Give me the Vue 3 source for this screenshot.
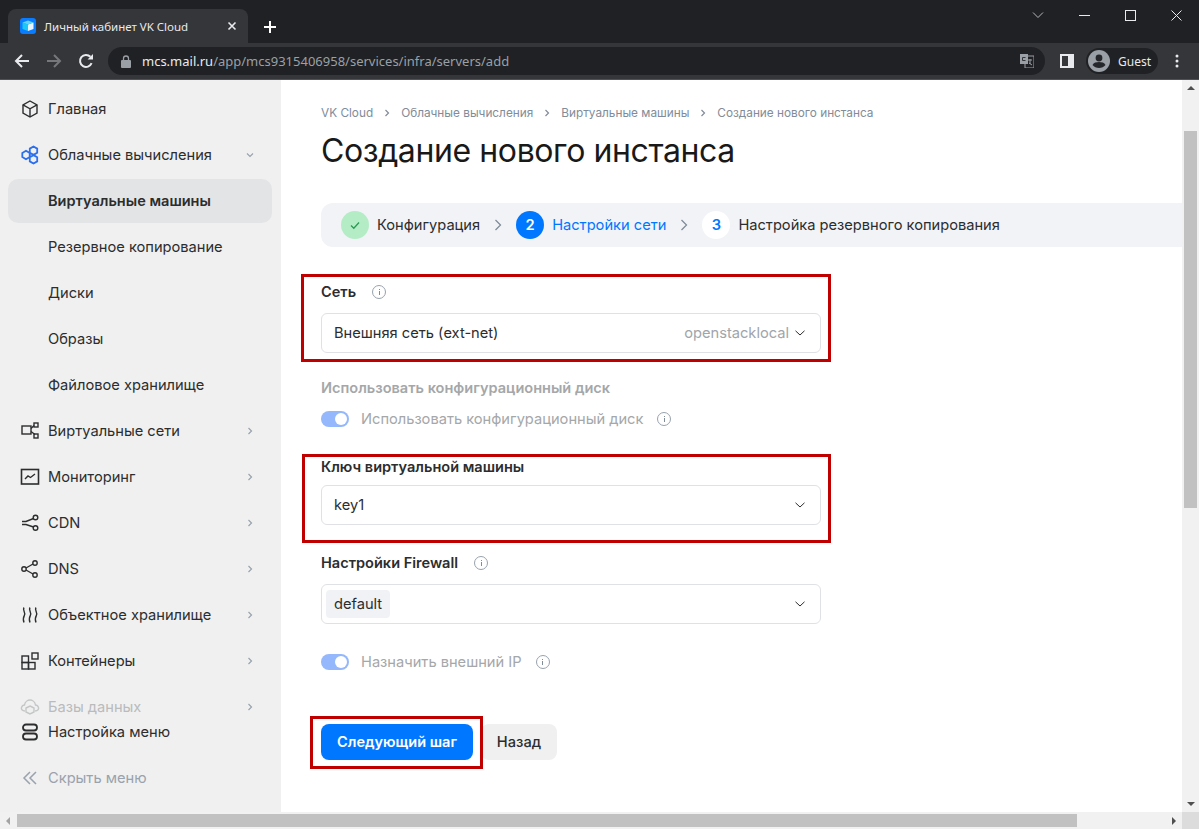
<template>
  <div class="window">
    <div class="tabstrip">
      <div class="tab">
        <svg class="favicon" width="16" height="16" viewBox="0 0 16 16">
          <rect width="16" height="16" rx="3" fill="#0a7cff" />
          <path d="M2.500 4.500 8 6.500v6.500L2.500 11z" fill="#19c8f5" />
          <path d="M13.500 4.500 8 6.500v6.500l5.500-2z" fill="#e8f6ff" />
          <path d="M2.500 4.500 8 2.500l5.500 2L8 6.500z" fill="#5fd4fa" />
        </svg>
        <span class="tab-title">Личный кабинет VK Cloud</span>
        <svg class="tab-close" width="10" height="10" viewBox="0 0 10 10">
          <path d="M1.500 1.500l7 7M8.500 1.500l-7 7" stroke="#e8eaed" stroke-width="1.600" />
        </svg>
      </div>
      <svg class="new-tab" width="14" height="14" viewBox="0 0 14 14">
        <path d="M7 1v12M1 7h12" stroke="#fff" stroke-width="2" />
      </svg>
      <div class="win-controls">
        <svg width="12" height="8" viewBox="0 0 12 8"><path d="M1 1.500l5 5 5-5" fill="none" stroke="#b5b7ba" /></svg>
        <svg width="11" height="11" viewBox="0 0 11 11"><path d="M0 5.500h11" stroke="#e8eaed" /></svg>
        <svg width="11" height="11" viewBox="0 0 11 11"><rect x=".5" y=".5" width="10" height="10" fill="none" stroke="#e8eaed" /></svg>
        <svg width="11" height="11" viewBox="0 0 11 11"><path d="M.5.500l10 10M10.500.500l-10 10" stroke="#e8eaed" /></svg>
      </div>
    </div>

    <div class="toolbar">
      <svg class="tool" width="16" height="16" viewBox="0 0 16 16">
        <path d="M15 8H2M8 2L2 8l6 6" fill="none" stroke="#e8eaed" stroke-width="2" />
      </svg>
      <svg class="tool" width="16" height="16" viewBox="0 0 16 16">
        <path d="M1 8h13M8 2l6 6-6 6" fill="none" stroke="#75777a" stroke-width="2" />
      </svg>
      <svg class="tool" width="16" height="16" viewBox="0 0 16 16">
        <path d="M13.600 10.200A6 6 0 1 1 12.400 3.800" fill="none" stroke="#e8eaed" stroke-width="2" />
        <path d="M9.600 6.400h5.400V1z" fill="#e8eaed" />
      </svg>
      <div class="omnibox">
        <svg width="10" height="13" viewBox="0 0 10 13">
          <path d="M2.500 5V3.500a2.500 2.500 0 0 1 5 0V5" fill="none" stroke="#9aa0a6" stroke-width="1.300" />
          <rect y="5" width="10" height="8" rx="1" fill="#9aa0a6" />
        </svg>
        <span class="url"><b>mcs.mail.ru</b>/app/mcs9315406958/services/infra/servers/add</span>
        <svg class="translate" width="14" height="14" viewBox="0 0 14 14">
          <rect x="5" y="2" width="9" height="12" fill="none" stroke="#9aa0a6" />
          <rect width="8" height="10" fill="#9aa0a6" />
          <path d="M5.500 3.500h-3v3h3" fill="none" stroke="#35363a" />
          <path d="M8 6h4M10 5v5M9 9l3 2" fill="none" stroke="#9aa0a6" />
        </svg>
      </div>
      <svg class="side-panel" width="14" height="14" viewBox="0 0 14 14">
        <rect width="14" height="14" fill="#e8eaed" />
        <rect x="2" y="2" width="6" height="10" fill="#35363a" />
      </svg>
      <div class="profile">
        <svg width="22" height="22" viewBox="0 0 22 22">
          <circle cx="11" cy="11" r="11" fill="#9aa0a6" />
          <circle cx="11" cy="8" r="3.400" fill="#26272a" />
          <path d="M4.500 15c1-2.400 4-3 6.500-3s5.500.6 6.500 3c-1.500 2-4 3-6.500 3s-5-1-6.500-3z" fill="#26272a" />
        </svg>
        <span>Guest</span>
      </div>
      <svg class="kebab" width="4" height="14" viewBox="0 0 4 14">
        <circle cx="2" cy="2" r="1.500" fill="#e8eaed" />
        <circle cx="2" cy="7" r="1.500" fill="#e8eaed" />
        <circle cx="2" cy="12" r="1.500" fill="#e8eaed" />
      </svg>
    </div>

    <div class="viewport">
      <div class="page">
        <aside class="sidebar">
          <nav class="nav">
            <a v-for="item in menu" :key="item.title"
              :class="['nav-item', { sub: item.sub, active: item.active, faded: item.faded }]">
              <svg v-if="item.icon" class="nav-icon" width="20" height="20" viewBox="0 0 20 20" fill="none"
                :stroke="item.color || '#2c2d2e'" stroke-width="1.400" v-html="icons[item.icon]"></svg>
              <span>{{ item.title }}</span>
              <svg v-if="item.arrow" class="nav-arrow" width="8" height="8" viewBox="0 0 8 8" fill="none"
                stroke="#99a2ad" stroke-width="1.200">
                <path :d="item.arrow === 'down' ? 'M1 2.500l3 3 3-3' : 'M2.500 1l3 3-3 3'" />
              </svg>
            </a>
          </nav>
          <div class="side-footer">
            <a class="nav-item compact">
              <svg class="nav-icon" width="20" height="20" viewBox="0 0 20 20" fill="none" stroke="#2c2d2e" stroke-width="1.800">
                <rect x="3" y="2.500" width="14" height="6" rx="3" />
                <rect x="3" y="11.500" width="14" height="6" rx="3" />
              </svg>
              <span>Настройка меню</span>
            </a>
            <a class="nav-item hide">
              <svg class="nav-icon" width="20" height="20" viewBox="0 0 20 20" fill="none" stroke="#99a2ad" stroke-width="1.500">
                <path d="M10 4l-6 6 6 6M16 4l-6 6 6 6" />
              </svg>
              <span>Скрыть меню</span>
            </a>
          </div>
        </aside>

        <main class="content">
          <div class="crumbs">
            <template v-for="(crumb, i) in crumbs" :key="crumb">
              <svg v-if="i" width="6" height="8" viewBox="0 0 6 8" fill="none" stroke="#818c99" stroke-width="1.200">
                <path d="M1.500 1l3 3-3 3" />
              </svg>
              <span>{{ crumb }}</span>
            </template>
          </div>
          <h1>Создание нового инстанса</h1>

          <div class="steps">
            <span class="step-num done">
              <svg width="12" height="12" viewBox="0 0 12 12" fill="none" stroke="#2a9c54" stroke-width="1.300">
                <path d="M2 6.500l2.800 2.800L10 3.500" />
              </svg>
            </span>
            <span class="step-text">Конфигурация</span>
            <svg class="step-arrow" width="8" height="12" viewBox="0 0 8 12" fill="none" stroke="#818c99" stroke-width="1.300">
              <path d="M1.500 1l5 5-5 5" />
            </svg>
            <span class="step-num current">2</span>
            <span class="step-text blue">Настройки сети</span>
            <svg class="step-arrow" width="8" height="12" viewBox="0 0 8 12" fill="none" stroke="#818c99" stroke-width="1.300">
              <path d="M1.500 1l5 5-5 5" />
            </svg>
            <span class="step-num next">3</span>
            <span class="step-text">Настройка резервного копирования</span>
          </div>

          <form class="form" @submit.prevent>
            <div class="field first">
              <span class="mark"></span>
              <label class="label">Сеть <i class="info"></i></label>
              <div class="select">
                <span>Внешняя сеть (ext-net)</span>
                <span class="hint">openstacklocal</span>
                <svg class="caret" width="10" height="6" viewBox="0 0 10 6" fill="none" stroke="#2c2d2e"><path d="M.5.800L5 5l4.500-4.200" /></svg>
              </div>
            </div>

            <label class="label muted gap-disk">Использовать конфигурационный диск</label>
            <div class="switch-row gap-switch">
              <span class="switch"></span>
              <span class="switch-text">Использовать конфигурационный диск</span>
              <i class="info"></i>
            </div>

            <div class="field key">
              <span class="mark"></span>
              <label class="label">Ключ виртуальной машины</label>
              <div class="select">
                <span>key1</span>
                <svg class="caret" width="10" height="6" viewBox="0 0 10 6" fill="none" stroke="#2c2d2e"><path d="M.5.800L5 5l4.500-4.200" /></svg>
              </div>
            </div>

            <div class="field firewall">
              <label class="label">Настройки Firewall <i class="info"></i></label>
              <div class="select tagged">
                <span class="tag">default</span>
                <svg class="caret" width="10" height="6" viewBox="0 0 10 6" fill="none" stroke="#2c2d2e"><path d="M.5.800L5 5l4.500-4.200" /></svg>
              </div>
            </div>

            <div class="switch-row gap-ip">
              <span class="switch"></span>
              <span class="switch-text">Назначить внешний IP</span>
              <i class="info"></i>
            </div>

            <div class="actions">
              <div class="primary-wrap">
                <span class="mark"></span>
                <button class="btn primary">Следующий шаг</button>
              </div>
              <button class="btn secondary">Назад</button>
            </div>
          </form>
        </main>
      </div>

      <div class="vscroll">
        <span class="arrow up"></span>
        <span class="vthumb"></span>
        <span class="arrow down"></span>
      </div>
      <div class="hscroll">
        <span class="arrow left"></span>
        <span class="hthumb"></span>
        <span class="arrow right"></span>
      </div>
      <div class="corner"></div>
    </div>
  </div>
</template>

<script setup>
const icons = {
  cube: '<path d="M10 2l7 3.800v8.400L10 18l-7-3.800V5.800z"/><path d="M3 5.800l7 4 7-4M10 9.800V18"/>',
  cloud: '<path d="M13.500 1.500l3.700 2.100v4.200l-3.700 2.100-3.700-2.100V3.600zM13.500 10.100l3.700 2.100v4.200l-3.700 2.100-3.700-2.100v-4.200zM6 5.800l3.700 2.100v4.200L6 14.200l-3.700-2.100V7.900z" stroke-width="1.800"/>',
  net: '<rect x="2" y="5" width="9" height="8"/><rect x="14" y="2" width="4" height="4"/><rect x="14" y="13" width="4" height="4"/><path d="M11 7.500l3-3M11 10.500l4 3"/>',
  chart: '<rect x="1.500" y="2.500" width="17" height="14.500" stroke-width="1.600"/><path d="M5 12l3-3 2.500 1.500L15 7"/>',
  cdn: '<circle cx="15.500" cy="4.500" r="2.300"/><circle cx="15.500" cy="15" r="2.300"/><path d="M2 8.500h4l7.500-3M2 11.500h4l7.500 2.500"/>',
  dns: '<circle cx="4" cy="10" r="2.200"/><circle cx="15" cy="4" r="2.200"/><circle cx="15" cy="16" r="2.200"/><path d="M6 9l7-4M6 11l7 4"/>',
  storage: '<path d="M4 2.500c-1.800 2.500 1.800 5 .5 7.500S3 15 4 17.500M10 2.500c-1.800 2.500 1.800 5 .5 7.500S9 15 10 17.500M16 2.500c-1.800 2.500 1.800 5 .5 7.500s-1.500 5-.5 7.500"/>',
  box: '<rect x="2" y="5" width="6.500" height="6.500"/><rect x="2" y="11.500" width="6.500" height="6.500"/><rect x="8.500" y="11.500" width="6.500" height="6.500"/><rect x="12" y="2" width="6" height="6"/>',
  db: '<path d="M5 14c-3 0-4-2-3.500-3.500S3.500 8 4.500 8C5 4.500 8 3 10 3s5 1.500 5.500 5c1 0 2.500 1 3 2.500S18 14 15 14"/><path d="M10 9l4 2v4l-4 2-4-2v-4z"/>'
}

const menu = [
  { title: 'Главная', icon: 'cube' },
  { title: 'Облачные вычисления', icon: 'cloud', color: '#2b6fed', arrow: 'down' },
  { title: 'Виртуальные машины', sub: true, active: true },
  { title: 'Резервное копирование', sub: true },
  { title: 'Диски', sub: true },
  { title: 'Образы', sub: true },
  { title: 'Файловое хранилище', sub: true },
  { title: 'Виртуальные сети', icon: 'net', arrow: 'right' },
  { title: 'Мониторинг', icon: 'chart', arrow: 'right' },
  { title: 'CDN', icon: 'cdn', arrow: 'right' },
  { title: 'DNS', icon: 'dns', arrow: 'right' },
  { title: 'Объектное хранилище', icon: 'storage', arrow: 'right' },
  { title: 'Контейнеры', icon: 'box', arrow: 'right' },
  { title: 'Базы данных', icon: 'db', arrow: 'right', faded: true, color: '#c4c6c8' }
]

const crumbs = ['VK Cloud', 'Облачные вычисления', 'Виртуальные машины', 'Создание нового инстанса']
</script>

<style>
html, body { margin: 0; overflow: hidden; }
</style>

<style scoped>
.window {
  width: 1199px;
  height: 829px;
  display: flex;
  flex-direction: column;
  overflow: hidden;
  font-family: Inter, "Noto Sans", sans-serif;
  color: #2c2d2e;
}

/* browser frame */
.tabstrip {
  height: 43px;
  flex: none;
  display: flex;
  align-items: flex-end;
  background: #202124;
  padding-left: 8px;
  box-sizing: border-box;
}
.tab {
  width: 240px;
  height: 34px;
  box-sizing: border-box;
  display: flex;
  align-items: center;
  padding: 0 11px 0 12px;
  background: #35363a;
  border-radius: 8px 8px 0 0;
}
.favicon { margin-right: 8px; flex: none; }
.tab-title {
  flex: 1;
  font: 11.500px "Noto Sans", sans-serif;
  color: #e8eaed;
  white-space: nowrap;
}
.new-tab { margin: 0 0 9px 15px; }
.win-controls {
  margin-left: auto;
  align-self: flex-start;
  height: 30px;
  display: flex;
  align-items: center;
  gap: 35px;
  padding-right: 17px;
}
.toolbar {
  height: 37px;
  flex: none;
  box-sizing: border-box;
  display: flex;
  align-items: center;
  background: #35363a;
  border-bottom: 1px solid #505154;
  padding-left: 14px;
}
.tool { margin-right: 16px; flex: none; }
.omnibox {
  width: 937px;
  height: 28px;
  margin-left: -2px;
  flex: none;
  box-sizing: border-box;
  display: flex;
  align-items: center;
  padding: 0 11px 0 13px;
  background: #202124;
  border-radius: 14px;
}
.url {
  margin-left: 11px;
  font: 13px "Noto Sans", sans-serif;
  color: #9aa0a6;
}
.url b { font-weight: 400; color: #e8eaed; }
.translate { margin-left: auto; }
.side-panel { margin-left: 15px; flex: none; }
.profile {
  width: 72px;
  height: 26px;
  margin-left: 12px;
  flex: none;
  box-sizing: border-box;
  display: flex;
  align-items: center;
  gap: 8px;
  padding-left: 2px;
  background: #202124;
  border-radius: 13px;
  font: 12px "Noto Sans", sans-serif;
  color: #e8eaed;
}
.kebab { margin-left: 17px; flex: none; }

/* viewport with scrollbars */
.viewport {
  flex: 1;
  min-height: 0;
  display: grid;
  grid-template-columns: 1fr 17px;
  grid-template-rows: 1fr 17px;
  background: #fff;
}
.page { display: flex; min-height: 0; min-width: 0; overflow: hidden; }
.vscroll {
  background: #f1f1f1;
  display: flex;
  flex-direction: column;
  align-items: center;
}
.vthumb {
  width: 13px;
  height: 377px;
  margin-top: 41px;
  background: #c1c1c1;
}
.hscroll {
  background: #f1f1f1;
  display: flex;
  align-items: center;
}
.hthumb {
  width: 1060px;
  height: 13px;
  margin-left: 7px;
  background: #c1c1c1;
}
.corner { background: #dcdcdc; }
.arrow { width: 0; height: 0; flex: none; border: 4px solid transparent; }
.arrow.up { border-bottom-color: #505050; border-top-width: 0; margin-top: 6px; }
.arrow.down { border-top-color: #505050; border-bottom-width: 0; margin-top: auto; margin-bottom: 6px; }
.arrow.left { border-right-color: #a3a3a3; border-left-width: 0; margin-left: 6px; }
.arrow.right { border-left-color: #505050; border-right-width: 0; margin-left: auto; margin-right: 6px; }

/* sidebar */
.sidebar {
  width: 281px;
  flex: none;
  display: flex;
  flex-direction: column;
  background: #f0f0f0;
  font-size: 14.650px;
}
.nav {
  flex: 1;
  min-height: 0;
  overflow: hidden;
  padding-top: 6px;
}
.nav-item {
  height: 46px;
  margin: 0 9px 0 8px;
  padding: 0 18px 0 12px;
  box-sizing: border-box;
  display: flex;
  align-items: center;
  gap: 8px;
  color: #2c2d2e;
  white-space: nowrap;
}
.nav-item span { margin-top: -1px; }
.nav-item.sub { padding-left: 40px; }
.nav-item.active {
  height: 44px;
  margin-top: 1px;
  margin-bottom: 1px;
  background: #e3e4e6;
  border-radius: 10px;
  font-weight: 600;
  font-size: 14.550px;
}
.nav-item.faded { color: #b9bbbd; }
.nav-icon { flex: none; }
.nav-arrow { margin-left: auto; }
.side-footer { flex: none; padding-bottom: 11px; background: #f0f0f0; }
.nav-item.compact { height: 32px; margin-bottom: 7px; }
.nav-item.hide { color: #99a2ad; }

/* main */
.content { flex: 1; min-width: 0; padding-left: 40px; }
.crumbs {
  height: 18px;
  margin-top: 24px;
  display: flex;
  align-items: center;
  gap: 11px;
  font-size: 11.800px;
  color: #818c99;
  white-space: nowrap;
}
.crumbs span { margin-top: -1px; }
h1 {
  margin: 9px 0 0;
  height: 40px;
  font-size: 32px;
  line-height: 40px;
  font-weight: 400;
  letter-spacing: -0.4px;
  color: #19191a;
  white-space: nowrap;
}
.steps {
  height: 44px;
  margin-top: 32px;
  padding-left: 20px;
  display: flex;
  align-items: center;
  background: #f1f3f7;
  border-radius: 12px 0 0 12px;
  font-size: 14.650px;
  white-space: nowrap;
}
.step-num {
  width: 28px;
  height: 28px;
  flex: none;
  box-sizing: border-box;
  display: flex;
  align-items: center;
  justify-content: center;
  border-radius: 50%;
  font-weight: 600;
}
.step-num.done { background: #b4ecc6; }
.step-num.current { background: #0077ff; color: #fff; padding-bottom: 1px; }
.step-num.next { background: #fff; color: #0077ff; padding-bottom: 1px; }
.step-text { margin: -1px 0 0 8px; }
.step-text.blue { color: #0077ff; }
.step-arrow { margin: 0 14px; flex: none; }

.form { width: 500px; font-size: 14.650px; }
.field { position: relative; }
.field.first { margin-top: 35px; }
.field.key { margin-top: 28px; }
.field.key .select { margin-top: 8px; }
.field.firewall { margin-top: 28px; }
.mark {
  position: absolute;
  border: 3px solid #c00000;
  box-sizing: border-box;
  pointer-events: none;
}
.field.first .mark { inset: -8px -10px -9px -20px; }
.field.key .mark { inset: -3px -10px -18px -19px; }
.label {
  height: 20px;
  box-sizing: border-box;
  padding-bottom: 1px;
  display: flex;
  align-items: center;
  font-size: 14.550px;
  font-weight: 600;
  color: #2c2d2e;
}
.label.muted { color: #a5a7a9; }
.gap-disk { margin-top: 25px; }
.gap-switch { margin-top: 11px; }
.gap-ip { margin-top: 28px; }
.info {
  width: 14px;
  height: 14px;
  margin: 1px 0 0 16px;
  flex: none;
  box-sizing: border-box;
  border: 1px solid #99a2ad;
  border-radius: 50%;
  position: relative;
}
.info::before {
  content: "";
  position: absolute;
  left: 5.500px;
  top: 2.500px;
  width: 1px;
  height: 1px;
  background: #818c99;
  box-shadow: 0 2px 0 #818c99, 0 3px 0 #818c99, 0 4px 0 #818c99, 0 5px 0 #818c99;
}
.select {
  height: 40px;
  margin-top: 11px;
  padding: 0 15px 1px 12px;
  box-sizing: border-box;
  display: flex;
  align-items: center;
  border: 1px solid #dfe1e5;
  border-radius: 6px;
  background: #fff;
}
.select .hint { margin-left: auto; color: #a0a5ab; }
.select .caret { margin: 1px 0 0 auto; flex: none; }
.select .hint + .caret { margin-left: 6px; }
.select.tagged { padding: 0 15px 0 4px; }
.tag {
  height: 28px;
  box-sizing: border-box;
  padding: 0 8px 1px;
  display: flex;
  align-items: center;
  background: #f0f2f5;
  border-radius: 4px;
}
.select.tagged .caret { margin-top: 0; }
.switch-row {
  height: 20px;
  display: flex;
  align-items: center;
  color: #a5a7a9;
}
.switch-text { margin-top: -1px; }
.switch-row .info { margin: 0 0 0 14px; }
.switch {
  width: 28px;
  height: 16px;
  margin-right: 12px;
  flex: none;
  border-radius: 8px;
  background: #94b8fb;
  position: relative;
}
.switch::after {
  content: "";
  position: absolute;
  right: 2px;
  top: 2px;
  width: 12px;
  height: 12px;
  border-radius: 50%;
  background: #fff;
}
.actions {
  margin-top: 52px;
  display: flex;
  gap: 8px;
}
.primary-wrap { position: relative; }
.primary-wrap .mark { inset: -8px -10px -9px -11px; z-index: 1; }
.btn {
  height: 36px;
  border: 0;
  border-radius: 8px;
  padding: 0 0 1px;
  font-family: inherit;
  font-size: 14.650px;
  display: block;
}
.btn.primary {
  width: 152px;
  background: #0077ff;
  color: #fff;
  font-size: 14.550px;
  font-weight: 600;
}
.btn.secondary {
  width: 76px;
  background: #f0f0f0;
  color: #2c2d2e;
  font-weight: 500;
}
</style>
